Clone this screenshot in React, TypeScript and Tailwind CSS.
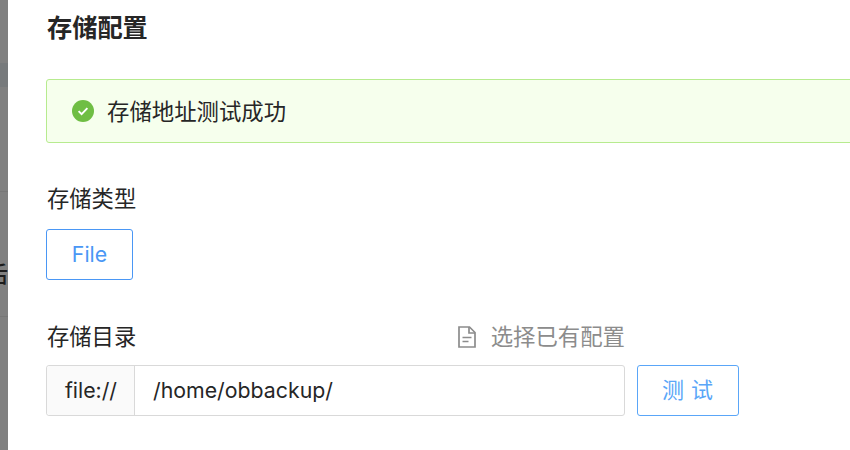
const font = "font-['Inter','Noto_Sans_CJK_SC',sans-serif]";

function CheckBadge() {
    return (
        <svg viewBox="0 0 22 22" className="h-[22px] w-[22px]">
            <circle cx="11" cy="11" r="11" fill="#6fbe44" />
            <path d="M6.6 11.2l3 3L15.4 8.2" fill="none" stroke="#fff" strokeWidth="1.9" />
        </svg>
    );
}

function DocIcon() {
    return (
        <svg viewBox="0 0 18 22" className="h-[22px] w-[18px]" fill="none" stroke="#8c8c8c" strokeWidth="1.7">
            <path d="M1 1h10.5L17 6.5V21H1z" />
            <path d="M11 1v6h6" />
            <path d="M4.5 11.5h9M4.5 15.5h6" />
        </svg>
    );
}

export default function App() {
    return (
        <div className={`flex h-[450px] w-[850px] overflow-hidden bg-white ${font}`}>
            {/* Dimmed page behind the drawer */}
            <div className="relative w-2 shrink-0 overflow-hidden bg-[#808080]">
                <div className="mt-[63px] h-[24px] bg-[#777a7c]" />
                <div className="mt-[104px] h-px bg-[#777777]" />
                <div className="mt-[124px] h-px bg-[#777777]" />
                <span className="absolute left-[-14px] top-[259px] text-[22px] leading-[30px] font-medium text-[#1c1c1c]">后</span>
            </div>

            {/* Drawer */}
            <div className="flex-1 overflow-hidden pl-[38px]">
                <h2 className="mt-[12px] pl-px text-[25.2px] leading-[32px] font-semibold text-[#262626]">存储配置</h2>

                <div className="mt-[35px] flex h-[64px] w-[900px] items-center rounded-[3px] border border-[#b7eb8f] bg-[#f6ffed] pl-[25px]">
                    <CheckBadge />
                    <span className="ml-[13px] mt-[1px] text-[22.4px] leading-[30px] text-[#262626]">存储地址测试成功</span>
                </div>

                <div className="mt-[41px] pl-px text-[22.3px] leading-[30px] text-[#262626]">存储类型</div>
                <button className="mt-[15px] block h-[51px] w-[87px] rounded-[3px] border border-[#4a97f5] text-[21.3px] text-[#4a97f5]">
                    File
                </button>

                <div className="mt-[42px] flex w-[579px] items-center justify-between">
                    <span className="pl-px text-[22.3px] leading-[30px] text-[#262626]">存储目录</span>
                    <span className="flex items-center gap-[15px] text-[22.4px] leading-[30px] text-[#8c8c8c]">
                        <DocIcon />
                        选择已有配置
                    </span>
                </div>

                <div className="mt-[13px] flex items-center">
                    <div className="flex h-[51px] w-[579px] rounded-[3px] border border-[#d9d9d9] text-[21.3px] text-[#262626]">
                        <span className="flex w-[88px] items-center justify-center rounded-l-[3px] border-r border-[#d9d9d9] bg-[#fafafa] pl-px">file://</span>
                        <span className="flex items-center pl-[18px]">/home/obbackup/</span>
                    </div>
                    <button className="ml-[12px] h-[51px] w-[102px] rounded-[3px] border border-[#5aa6f8] pl-[6px] text-[22px] tracking-[7px] text-[#5aa6f8]">
                        测试
                    </button>
                </div>
            </div>
        </div>
    );
}
